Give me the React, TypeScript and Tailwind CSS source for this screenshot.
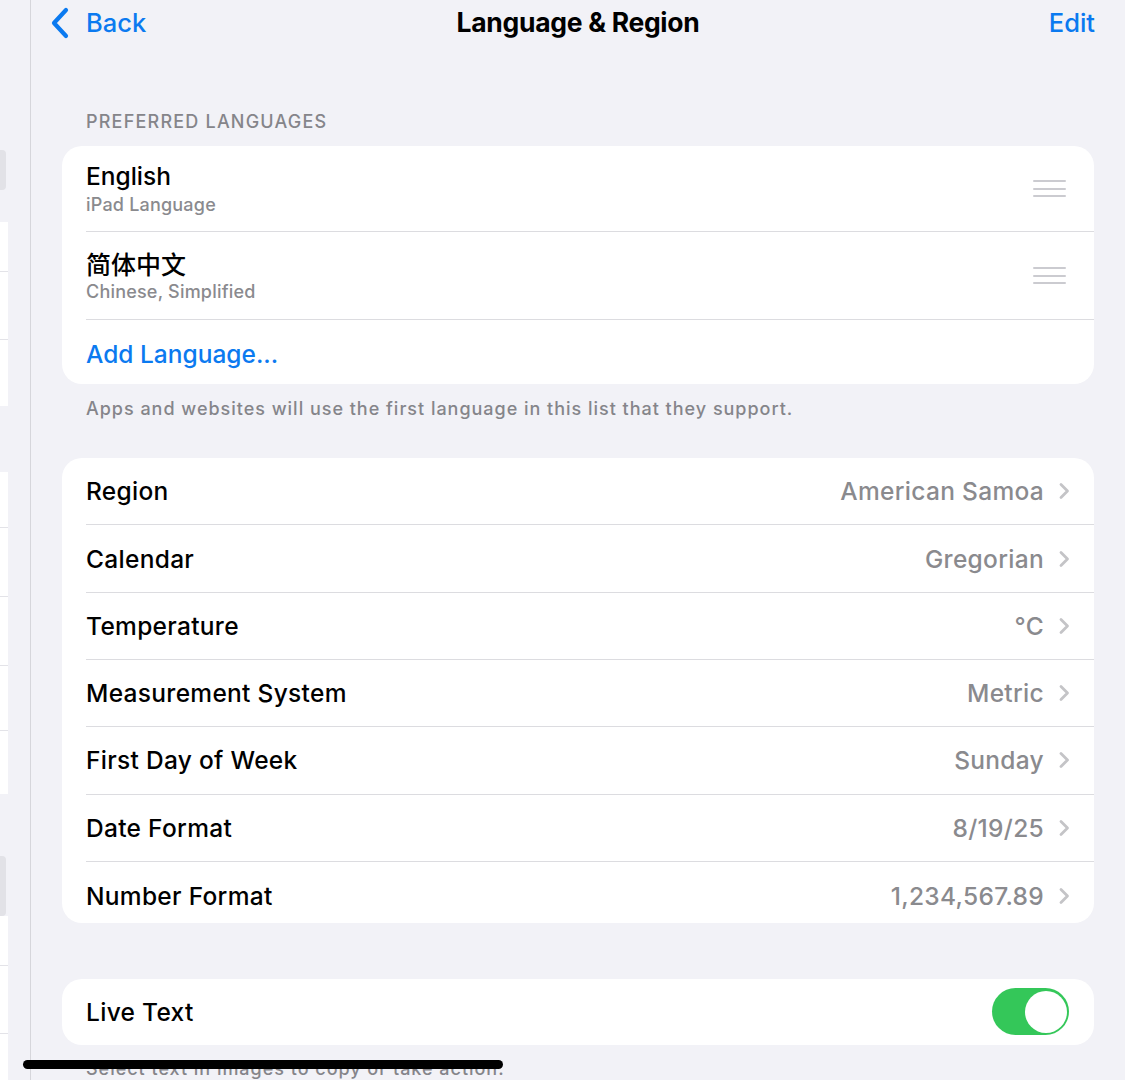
import React from "react";

const FONT = { fontFamily: "Inter, 'Noto Sans', 'Noto Sans CJK SC', sans-serif" };

function Chevron() {
  return (
    <svg width="12" height="18" viewBox="0 0 12 18" className="ml-[14px] shrink-0">
      <path d="M3 2.5 L9.5 9 L3 15.5" fill="none" stroke="#c4c4c7" strokeWidth="2.8" strokeLinecap="round" strokeLinejoin="round" />
    </svg>
  );
}

function Handle() {
  return (
    <div className="flex flex-col gap-[5.5px] w-[33px] shrink-0">
      <div className="h-[2px] bg-[#cbcbd0] rounded-full" />
      <div className="h-[2px] bg-[#cbcbd0] rounded-full" />
      <div className="h-[2px] bg-[#cbcbd0] rounded-full" />
    </div>
  );
}

const settings: [string, string][] = [
  ["Region", "American Samoa"],
  ["Calendar", "Gregorian"],
  ["Temperature", "°C"],
  ["Measurement System", "Metric"],
  ["First Day of Week", "Sunday"],
  ["Date Format", "8/19/25"],
  ["Number Format", "1,234,567.89"],
];

function Sidebar() {
  return (
    <aside className="w-[31px] shrink-0 border-r border-[#d6d6db] flex flex-col">
      <div className="h-[150px]" />
      <div className="h-[40px] w-[6px] bg-[#e2e2e7] rounded-r-[4px]" />
      <div className="h-[32px]" />
      <div className="w-[8px] bg-white flex flex-col">
        <div className="h-[50px] border-b border-[#e3e3e8]" />
        <div className="h-[68px] border-b border-[#e3e3e8]" />
        <div className="h-[66px]" />
      </div>
      <div className="h-[66px]" />
      <div className="w-[8px] bg-white flex flex-col">
        <div className="h-[56px] border-b border-[#e3e3e8]" />
        <div className="h-[69px] border-b border-[#e3e3e8]" />
        <div className="h-[69px] border-b border-[#e3e3e8]" />
        <div className="h-[65px] border-b border-[#e3e3e8]" />
        <div className="h-[63px]" />
      </div>
      <div className="h-[62px]" />
      <div className="h-[60px] w-[6px] bg-[#e2e2e7] rounded-r-[4px]" />
      <div className="w-[8px] bg-white flex flex-col flex-1">
        <div className="h-[50px] border-b border-[#e3e3e8]" />
        <div className="h-[68px] border-b border-[#e3e3e8]" />
        <div className="flex-1" />
      </div>
    </aside>
  );
}

export default function App() {
  return (
    <div className="w-[1125px] h-[1080px] bg-[#f2f2f7] flex overflow-hidden relative text-black" style={FONT}>
      <Sidebar />
      <main className="flex-1 flex flex-col">
        {/* Nav */}
        <div className="h-[46px] flex items-center justify-between pl-[19px] pr-[30px] relative">
          <div className="flex items-center text-[#0b7af0]">
            <svg width="20" height="32" viewBox="0 0 20 32" className="mr-[16px]">
              <path d="M16 3 L4 16 L16 29" fill="none" stroke="#0b7af0" strokeWidth="4.2" strokeLinecap="round" strokeLinejoin="round" />
            </svg>
            <span className="text-[25.5px] font-medium leading-none">Back</span>
          </div>
          <div className="absolute left-0 right-0 text-center pointer-events-none text-[26.5px] font-bold tracking-[-0.3px] leading-none">
            Language &amp; Region
          </div>
          <span className="text-[25.5px] font-medium leading-none text-[#0b7af0]">Edit</span>
        </div>

        <div className="mt-[66px] pl-[55px] text-[18px] font-medium leading-[22px] text-[#85858a] tracking-[1.2px] uppercase">
          Preferred Languages
        </div>

        <div className="mt-[13px] mx-[31px] bg-white rounded-[20px] overflow-hidden">
          <div className="h-[86px] ml-[24px] pr-[28px] flex items-center border-b border-[#dcdce0]">
            <div className="flex-1 flex flex-col">
              <span className="text-[24.5px] font-medium leading-[28px]">English</span>
              <span className="mt-[4px] text-[18px] font-medium leading-[22px] text-[#8a8a8e] tracking-[0.2px]">iPad Language</span>
            </div>
            <Handle />
          </div>
          <div className="h-[88px] ml-[24px] pr-[28px] flex items-center border-b border-[#dcdce0]">
            <div className="flex-1 flex flex-col">
              <span className="text-[25px] leading-[28px]" style={{ fontFamily: "'Noto Sans CJK SC', sans-serif", fontWeight: 500 }}>简体中文</span>
              <span className="mt-[4px] text-[18px] font-medium leading-[22px] text-[#8a8a8e] tracking-[0.2px]">Chinese, Simplified</span>
            </div>
            <Handle />
          </div>
          <div className="h-[67px] ml-[24px] flex items-center">
            <span className="text-[24.5px] font-medium leading-[28px] text-[#0b7af0]">Add Language...</span>
          </div>
        </div>

        <div className="mt-[14px] pl-[55px] text-[18px] font-medium leading-[22px] text-[#85858a] tracking-[0.98px] whitespace-nowrap">
          Apps and websites will use the first language in this list that they support.
        </div>

        <div className="mt-[38px] mx-[31px] bg-white rounded-[20px] overflow-hidden">
          {settings.map(([label, value], i) => (
            <div
              key={label}
              className={
                "h-[67.3px] ml-[24px] pr-[24px] flex items-center " +
                (i < settings.length - 1 ? "border-b border-[#dcdce0]" : "")
              }
            >
              <span className="flex-1 text-[24.5px] font-medium leading-[28px] tracking-[0.3px]">{label}</span>
              <span className="text-[24.5px] font-medium leading-[28px] text-[#8a8a8e] tracking-[0.3px]">{value}</span>
              <Chevron />
            </div>
          ))}
        </div>

        <div className="mt-[56px] mx-[31px] bg-white rounded-[20px] h-[67px] pl-[24px] pr-[25px] flex items-center">
          <span className="flex-1 text-[24.5px] font-medium leading-[28px] tracking-[0.3px]">Live Text</span>
          <div className="w-[77px] h-[47px] rounded-full bg-[#34c759] flex items-center justify-end p-[2.5px]">
            <div className="w-[42px] h-[42px] rounded-full bg-white" />
          </div>
        </div>

        <div className="mt-[13px] pl-[55px] text-[18px] font-medium leading-[22px] text-[#85858a] tracking-[0.98px] whitespace-nowrap">
          Select text in images to copy or take action.
        </div>
      </main>

      <div className="absolute left-[23px] top-[1060px] w-[480px] h-[9px] rounded-full bg-black" />
    </div>
  );
}
